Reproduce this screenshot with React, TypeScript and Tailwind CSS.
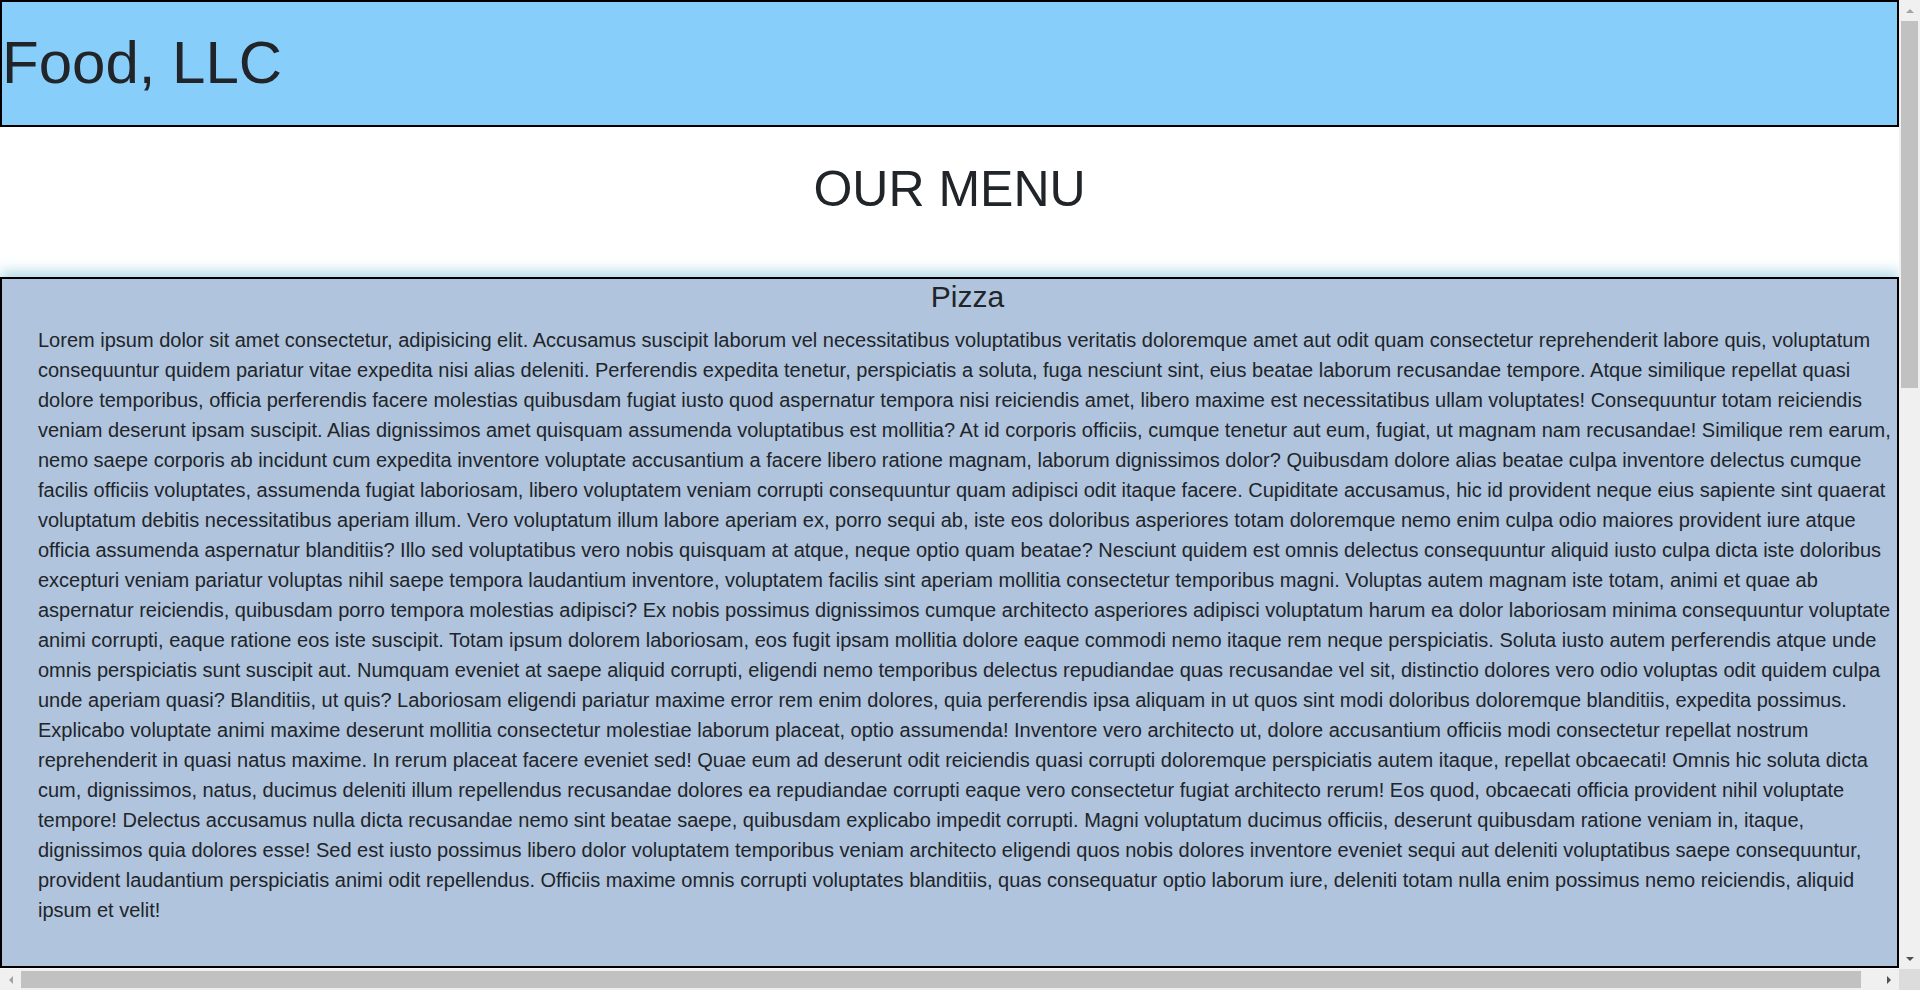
import React from "react";

const PIZZA_TEXT =
  "Lorem ipsum dolor sit amet consectetur, adipisicing elit. Accusamus suscipit laborum vel necessitatibus voluptatibus veritatis doloremque amet aut odit quam consectetur reprehenderit labore quis, voluptatum consequuntur quidem pariatur vitae expedita nisi alias deleniti. Perferendis expedita tenetur, perspiciatis a soluta, fuga nesciunt sint, eius beatae laborum recusandae tempore. Atque similique repellat quasi dolore temporibus, officia perferendis facere molestias quibusdam fugiat iusto quod aspernatur tempora nisi reiciendis amet, libero maxime est necessitatibus ullam voluptates! Consequuntur totam reiciendis veniam deserunt ipsam suscipit. Alias dignissimos amet quisquam assumenda voluptatibus est mollitia? At id corporis officiis, cumque tenetur aut eum, fugiat, ut magnam nam recusandae! Similique rem earum, nemo saepe corporis ab incidunt cum expedita inventore voluptate accusantium a facere libero ratione magnam, laborum dignissimos dolor? Quibusdam dolore alias beatae culpa inventore delectus cumque facilis officiis voluptates, assumenda fugiat laboriosam, libero voluptatem veniam corrupti consequuntur quam adipisci odit itaque facere. Cupiditate accusamus, hic id provident neque eius sapiente sint quaerat voluptatum debitis necessitatibus aperiam illum. Vero voluptatum illum labore aperiam ex, porro sequi ab, iste eos doloribus asperiores totam doloremque nemo enim culpa odio maiores provident iure atque officia assumenda aspernatur blanditiis? Illo sed voluptatibus vero nobis quisquam at atque, neque optio quam beatae? Nesciunt quidem est omnis delectus consequuntur aliquid iusto culpa dicta iste doloribus excepturi veniam pariatur voluptas nihil saepe tempora laudantium inventore, voluptatem facilis sint aperiam mollitia consectetur temporibus magni. Voluptas autem magnam iste totam, animi et quae ab aspernatur reiciendis, quibusdam porro tempora molestias adipisci? Ex nobis possimus dignissimos cumque architecto asperiores adipisci voluptatum harum ea dolor laboriosam minima consequuntur voluptate animi corrupti, eaque ratione eos iste suscipit. Totam ipsum dolorem laboriosam, eos fugit ipsam mollitia dolore eaque commodi nemo itaque rem neque perspiciatis. Soluta iusto autem perferendis atque unde omnis perspiciatis sunt suscipit aut. Numquam eveniet at saepe aliquid corrupti, eligendi nemo temporibus delectus repudiandae quas recusandae vel sit, distinctio dolores vero odio voluptas odit quidem culpa unde aperiam quasi? Blanditiis, ut quis? Laboriosam eligendi pariatur maxime error rem enim dolores, quia perferendis ipsa aliquam in ut quos sint modi doloribus doloremque blanditiis, expedita possimus. Explicabo voluptate animi maxime deserunt mollitia consectetur molestiae laborum placeat, optio assumenda! Inventore vero architecto ut, dolore accusantium officiis modi consectetur repellat nostrum reprehenderit in quasi natus maxime. In rerum placeat facere eveniet sed! Quae eum ad deserunt odit reiciendis quasi corrupti doloremque perspiciatis autem itaque, repellat obcaecati! Omnis hic soluta dicta cum, dignissimos, natus, ducimus deleniti illum repellendus recusandae dolores ea repudiandae corrupti eaque vero consectetur fugiat architecto rerum! Eos quod, obcaecati officia provident nihil voluptate tempore! Delectus accusamus nulla dicta recusandae nemo sint beatae saepe, quibusdam explicabo impedit corrupti. Magni voluptatum ducimus officiis, deserunt quibusdam ratione veniam in, itaque, dignissimos quia dolores esse! Sed est iusto possimus libero dolor voluptatem temporibus veniam architecto eligendi quos nobis dolores inventore eveniet sequi aut deleniti voluptatibus saepe consequuntur, provident laudantium perspiciatis animi odit repellendus. Officiis maxime omnis corrupti voluptates blanditiis, quas consequatur optio laborum iure, deleniti totam nulla enim possimus nemo reiciendis, aliquid ipsum et velit!";

// little scrollbar arrow, dir = up | down | left | right
function Arrow({ dir, color }: { dir: "up" | "down" | "left" | "right"; color: string }) {
  const pts = {
    up: "0,5 4,1 8,5",
    down: "0,1 4,5 8,1",
    left: "5,0 1,4 5,8",
    right: "1,0 5,4 1,8",
  }[dir];
  const vertical = dir === "up" || dir === "down";
  return (
    <svg width={vertical ? 8 : 6} height={vertical ? 6 : 8} viewBox={vertical ? "0 0 8 6" : "0 0 6 8"}>
      <polygon points={pts} fill={color} />
    </svg>
  );
}

function VScroll() {
  return (
    <div className="flex w-[21px] flex-col bg-[#f0f0f0]">
      <div className="flex h-[21px] items-center justify-center">
        <Arrow dir="up" color="#a3a3a3" />
      </div>
      <div className="flex flex-1 flex-col px-[2px]">
        <div className="h-[367px] bg-[#c1c1c1]" />
      </div>
      <div className="flex h-[21px] items-center justify-center">
        <Arrow dir="down" color="#505050" />
      </div>
    </div>
  );
}

function HScroll() {
  return (
    <div className="flex h-[21px] w-[1899px] bg-[#f0f0f0]">
      <div className="flex w-[21px] items-center justify-center">
        <Arrow dir="left" color="#a3a3a3" />
      </div>
      <div className="flex flex-1 items-center">
        <div className="h-[17px] w-[1840px] bg-[#c1c1c1]" />
      </div>
      <div className="flex w-[21px] items-center justify-center">
        <Arrow dir="right" color="#505050" />
      </div>
    </div>
  );
}

function Header() {
  return (
    <header className="h-[127px] border-2 border-black bg-[#87cefa] pt-[26px]">
      <h1 className="text-[60px] leading-[69px]">Food, LLC</h1>
    </header>
  );
}

function MenuItem({ title, text }: { title: string; text: string }) {
  return (
    <li className="border-2 border-black bg-[#b0c4de] pb-[21px] pl-[36px] shadow-[0_-6px_12px_rgba(173,216,230,0.9)]">
      <h4 className="mb-[10px] text-center text-[30px] leading-[36px]">{title}</h4>
      <p className="mb-[20px] text-[20px] leading-[30px]">{text}</p>
    </li>
  );
}

export default function App() {
  return (
    <div className="flex h-[990px] w-[1920px] flex-col overflow-hidden font-['Liberation_Sans',Arial,sans-serif] text-[#212529]">
      <div className="flex min-h-0 flex-1">
        <main className="w-[1899px] overflow-hidden">
          <Header />
          <div className="h-[150px] pt-[32px]">
            <h1 className="text-center text-[50px] leading-[60px]">OUR MENU</h1>
          </div>
          <ul className="flex flex-col gap-[40px]">
            <MenuItem title="Pizza" text={PIZZA_TEXT} />
          </ul>
        </main>
        <VScroll />
      </div>
      <div className="flex">
        <HScroll />
        <div className="h-[21px] w-[21px] bg-[#dcdcdc]" />
      </div>
    </div>
  );
}
